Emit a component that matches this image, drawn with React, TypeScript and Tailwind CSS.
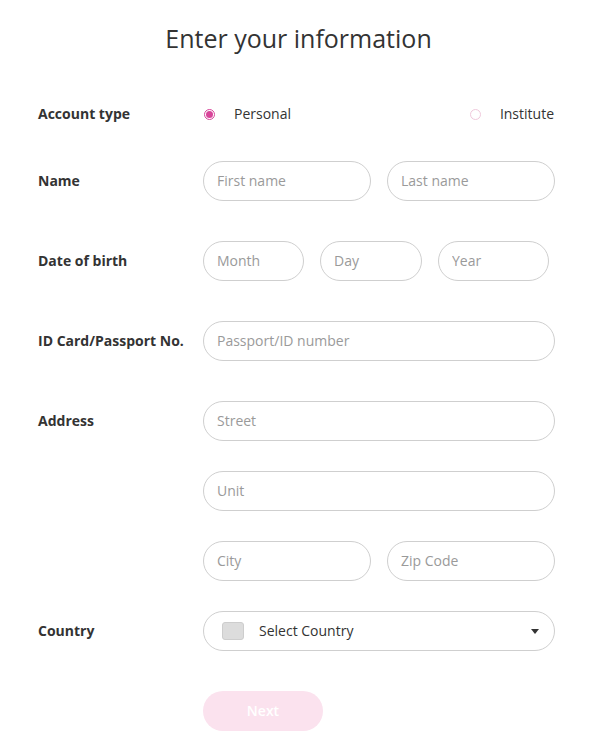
import { useState } from 'react';

function Field({ placeholder, className = '' }: { placeholder: string; className?: string }) {
  return (
    <input
      placeholder={placeholder}
      className={`h-[40px] rounded-full border border-[#cfcfcf] bg-white px-[13px] pb-[2px] text-[14px] text-[#333] placeholder:text-[#9a9a9a] outline-none ${className}`}
    />
  );
}

function Radio({ checked, label, onClick }: { checked: boolean; label: string; onClick: () => void }) {
  return (
    <button type="button" onClick={onClick} className="flex items-center gap-[19px]">
      <span
        className={`flex h-[11px] w-[11px] items-center justify-center rounded-full border ${
          checked ? 'border-[#d8459a]' : 'border-[#f0c9dc]'
        }`}
      >
        {checked && <span className="h-[7px] w-[7px] rounded-full bg-[#d8459a]" />}
      </span>
      <span className="pb-[2px] text-[14px] text-[#333]">{label}</span>
    </button>
  );
}

function Row({ label, children, className = '' }: { label?: string; children: React.ReactNode; className?: string }) {
  return (
    <div className={`flex items-center ${className}`}>
      <div className="w-[165px] shrink-0 pb-[2px] text-[14px] font-bold text-[#333]">{label}</div>
      <div className="flex flex-1 items-center gap-[16px]">{children}</div>
    </div>
  );
}

export default function App() {
  const [type, setType] = useState('personal');

  return (
    <div className="min-h-[756px] w-[602px] bg-white pl-[38px] pr-[47px]" style={{ fontFamily: '"Open Sans", sans-serif' }}>
      <h1 className="pt-[20px] pl-[4px] text-center text-[25px] leading-[36px] text-[#333]">Enter your information</h1>

      <Row label="Account type" className="mt-[38px] h-[40px]">
        <div className="flex flex-1 items-center justify-between pl-[1px]">
          <Radio checked={type === 'personal'} label="Personal" onClick={() => setType('personal')} />
          <div className="pr-[1px]">
            <Radio checked={type === 'institute'} label="Institute" onClick={() => setType('institute')} />
          </div>
        </div>
      </Row>

      <Row label="Name" className="mt-[27px]">
        <Field placeholder="First name" className="w-0 flex-1" />
        <Field placeholder="Last name" className="w-0 flex-1" />
      </Row>

      <Row label="Date of birth" className="mt-[40px]">
        <Field placeholder="Month" className="w-[101px]" />
        <Field placeholder="Day" className="w-[102px]" />
        <Field placeholder="Year" className="w-[111px]" />
      </Row>

      <Row label="ID Card/Passport No." className="mt-[40px]">
        <Field placeholder="Passport/ID number" className="w-0 flex-1" />
      </Row>

      <Row label="Address" className="mt-[40px]">
        <Field placeholder="Street" className="w-0 flex-1" />
      </Row>
      <Row className="mt-[30px]">
        <Field placeholder="Unit" className="w-0 flex-1" />
      </Row>
      <Row className="mt-[30px]">
        <Field placeholder="City" className="w-0 flex-1" />
        <Field placeholder="Zip Code" className="w-0 flex-1" />
      </Row>

      <Row label="Country" className="mt-[30px]">
        <button
          type="button"
          className="flex h-[40px] flex-1 items-center rounded-full border border-[#cfcfcf] bg-white pl-[18px] pr-[14px]"
        >
          <span className="h-[18px] w-[22px] rounded-[3px] border border-[#cdcdcd] bg-[#dcdcdc]" />
          <span className="ml-[15px] flex-1 pb-[2px] text-left text-[14px] text-[#333]">Select Country</span>
          <svg width="8" height="5" viewBox="0 0 8 5" className="mr-[1px]">
            <path d="M0 0h8L4 5z" fill="#333" />
          </svg>
        </button>
      </Row>

      <Row className="mt-[40px]">
        <button
          type="button"
          disabled
          className="h-[40px] w-[120px] rounded-full bg-[#fbe2ee] pb-[2px] text-[14px] font-semibold text-white"
        >
          Next
        </button>
      </Row>
    </div>
  );
}
